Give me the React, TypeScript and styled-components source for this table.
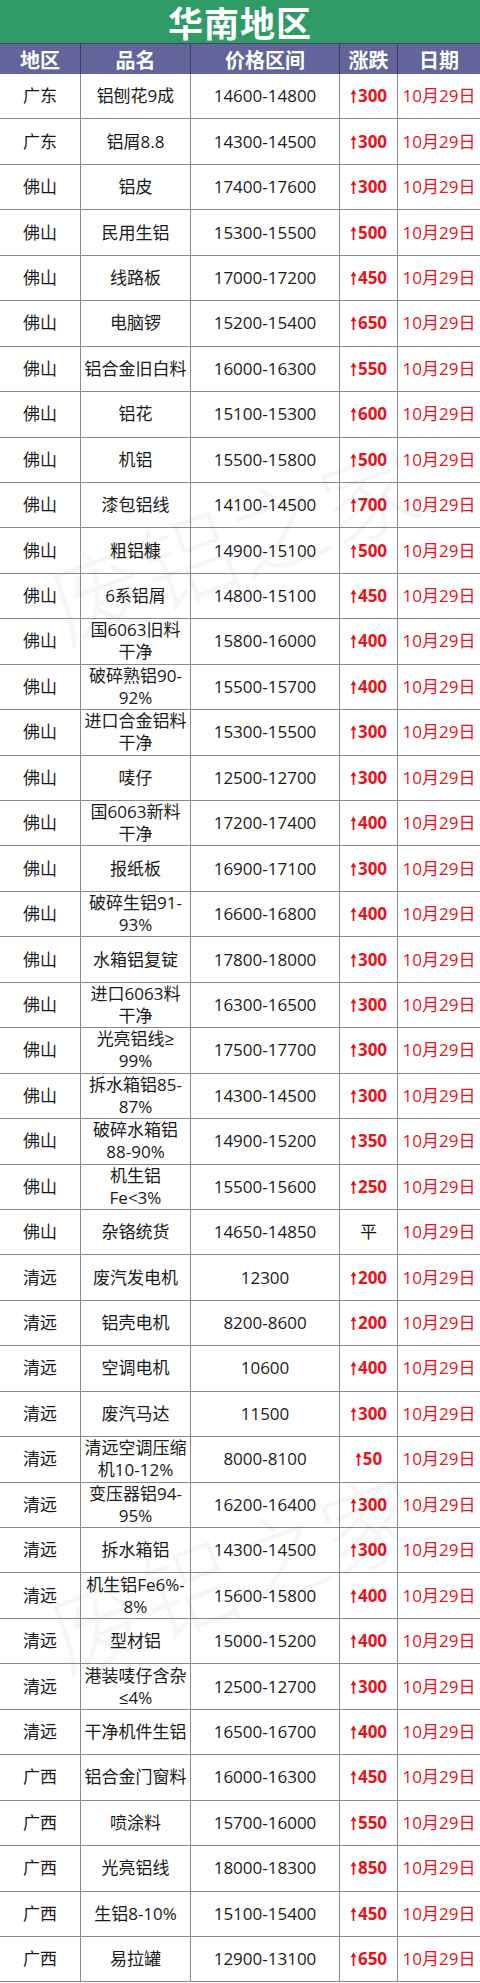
import { createGlobalStyle, styled } from "styled-components";

// 华南地区 铝价行情表
type Row = {
  region: string;
  name: string;
  price: string;
  change: string;
};

const rows: Row[] = [
  { region: "广东", name: "铝刨花9成", price: "14600-14800", change: "300" },
  { region: "广东", name: "铝屑8.8", price: "14300-14500", change: "300" },
  { region: "佛山", name: "铝皮", price: "17400-17600", change: "300" },
  { region: "佛山", name: "民用生铝", price: "15300-15500", change: "500" },
  { region: "佛山", name: "线路板", price: "17000-17200", change: "450" },
  { region: "佛山", name: "电脑锣", price: "15200-15400", change: "650" },
  { region: "佛山", name: "铝合金旧白料", price: "16000-16300", change: "550" },
  { region: "佛山", name: "铝花", price: "15100-15300", change: "600" },
  { region: "佛山", name: "机铝", price: "15500-15800", change: "500" },
  { region: "佛山", name: "漆包铝线", price: "14100-14500", change: "700" },
  { region: "佛山", name: "粗铝糠", price: "14900-15100", change: "500" },
  { region: "佛山", name: "6系铝屑", price: "14800-15100", change: "450" },
  { region: "佛山", name: "国6063旧料\n干净", price: "15800-16000", change: "400" },
  { region: "佛山", name: "破碎熟铝90-\n92%", price: "15500-15700", change: "400" },
  { region: "佛山", name: "进口合金铝料\n干净", price: "15300-15500", change: "300" },
  { region: "佛山", name: "唛仔", price: "12500-12700", change: "300" },
  { region: "佛山", name: "国6063新料\n干净", price: "17200-17400", change: "400" },
  { region: "佛山", name: "报纸板", price: "16900-17100", change: "300" },
  { region: "佛山", name: "破碎生铝91-\n93%", price: "16600-16800", change: "400" },
  { region: "佛山", name: "水箱铝复锭", price: "17800-18000", change: "300" },
  { region: "佛山", name: "进口6063料\n干净", price: "16300-16500", change: "300" },
  { region: "佛山", name: "光亮铝线≥\n99%", price: "17500-17700", change: "300" },
  { region: "佛山", name: "拆水箱铝85-\n87%", price: "14300-14500", change: "300" },
  { region: "佛山", name: "破碎水箱铝\n88-90%", price: "14900-15200", change: "350" },
  { region: "佛山", name: "机生铝\nFe<3%", price: "15500-15600", change: "250" },
  { region: "佛山", name: "杂铬统货", price: "14650-14850", change: "平" },
  { region: "清远", name: "废汽发电机", price: "12300", change: "200" },
  { region: "清远", name: "铝壳电机", price: "8200-8600", change: "200" },
  { region: "清远", name: "空调电机", price: "10600", change: "400" },
  { region: "清远", name: "废汽马达", price: "11500", change: "300" },
  { region: "清远", name: "清远空调压缩\n机10-12%", price: "8000-8100", change: "50" },
  { region: "清远", name: "变压器铝94-\n95%", price: "16200-16400", change: "300" },
  { region: "清远", name: "拆水箱铝", price: "14300-14500", change: "300" },
  { region: "清远", name: "机生铝Fe6%-\n8%", price: "15600-15800", change: "400" },
  { region: "清远", name: "型材铝", price: "15000-15200", change: "400" },
  { region: "清远", name: "港装唛仔含杂\n≤4%", price: "12500-12700", change: "300" },
  { region: "清远", name: "干净机件生铝", price: "16500-16700", change: "400" },
  { region: "广西", name: "铝合金门窗料", price: "16000-16300", change: "450" },
  { region: "广西", name: "喷涂料", price: "15700-16000", change: "550" },
  { region: "广西", name: "光亮铝线", price: "18000-18300", change: "850" },
  { region: "广西", name: "生铝8-10%", price: "15100-15400", change: "450" },
  { region: "广西", name: "易拉罐", price: "12900-13100", change: "650" },
];

const DATE = "10月29日";
const COLUMNS = "81px 110px 149px 58px 82px";

const GlobalStyle = createGlobalStyle`
  * { box-sizing: border-box; }
  body {
    margin: 0;
    background: #ffffff;
    font-family: "Open Sans", "Noto Sans CJK SC", sans-serif;
  }
`;

const Sheet = styled.div`
  position: relative;
  width: 480px;
  overflow: hidden;
  background: #ffffff;
`;

const TitleBar = styled.div`
  height: 44px;
  display: flex;
  align-items: center;
  justify-content: center;
  background: #2f9b67;
  color: #ffffff;
  font-size: 35px;
  font-weight: 700;
  letter-spacing: 1px;
  border-bottom: 1px solid #3d4a52;
`;

const HeaderRow = styled.div`
  height: 30px;
  display: grid;
  grid-template-columns: ${COLUMNS};
  background: #63649b;
`;

const HeaderCell = styled.div`
  display: flex;
  align-items: center;
  justify-content: center;
  color: #ffffff;
  font-size: 20px;
  font-weight: 700;
  border-right: 1px solid #3e3f5e;

  &:last-child {
    border-right: none;
  }
`;

const BodyRow = styled.div`
  height: 45.45px;
  display: grid;
  grid-template-columns: ${COLUMNS};
  border-bottom: 1px solid #8a8a8a;
`;

const Cell = styled.div<{ $red?: boolean; $bold?: boolean }>`
  display: flex;
  align-items: center;
  justify-content: center;
  padding: 0 2px;
  text-align: center;
  white-space: pre-line;
  font-size: 17px;
  line-height: 22px;
  font-weight: ${({ $bold }) => ($bold ? 700 : 400)};
  color: ${({ $red }) => ($red ? "#e8141c" : "#1a1a1a")};
  border-right: 1px solid #8a8a8a;

  &:last-child {
    border-right: none;
  }
`;

const Change = styled.span`
  display: inline-flex;
  align-items: center;
  gap: 1px;
`;

const Watermark = styled.div<{ $top: number; $left: number }>`
  position: absolute;
  top: ${({ $top }) => $top}px;
  left: ${({ $left }) => $left}px;
  font-size: 96px;
  font-weight: 300;
  color: rgba(0, 0, 0, 0.035);
  transform: rotate(-20deg);
  white-space: nowrap;
  pointer-events: none;
`;

function UpArrow() {
  return (
    <svg width="7" height="14" viewBox="0 0 7 14">
      <path d="M3.5 14V2" stroke="#e8141c" strokeWidth="1.7" />
      <path d="M0.6 5.2L3.5 0.4L6.4 5.2Z" fill="#e8141c" />
    </svg>
  );
}

export default function App() {
  return (
    <Sheet>
      <GlobalStyle />
      <TitleBar>华南地区</TitleBar>
      <HeaderRow>
        <HeaderCell>地区</HeaderCell>
        <HeaderCell>品名</HeaderCell>
        <HeaderCell>价格区间</HeaderCell>
        <HeaderCell>涨跌</HeaderCell>
        <HeaderCell>日期</HeaderCell>
      </HeaderRow>
      {rows.map((row, i) => {
        const flat = row.change === "平";
        return (
          <BodyRow key={i}>
            <Cell>{row.region}</Cell>
            <Cell>{row.name}</Cell>
            <Cell>{row.price}</Cell>
            {flat ? (
              <Cell>平</Cell>
            ) : (
              <Cell $red $bold>
                <Change>
                  <UpArrow />
                  {row.change}
                </Change>
              </Cell>
            )}
            <Cell $red>{DATE}</Cell>
          </BodyRow>
        );
      })}
      <Watermark $top={470} $left={40}>废铝之家</Watermark>
      <Watermark $top={1500} $left={40}>废铝之家</Watermark>
    </Sheet>
  );
}
